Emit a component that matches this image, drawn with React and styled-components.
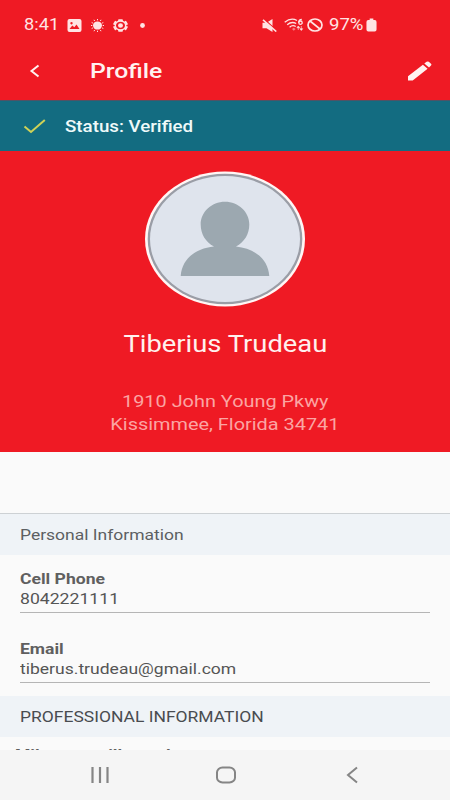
import styled, { createGlobalStyle } from 'styled-components'

const colors = {
  red: '#ef1a24',
  teal: '#136c81',
  page: '#fafafa',
  band: '#eff3f7',
  nav: '#f5f5f5',
}

const GlobalStyle = createGlobalStyle`
  * {
    box-sizing: border-box;
  }
  body {
    margin: 0;
    font-family: Roboto, 'Liberation Sans', sans-serif;
  }
`
const Screen = styled.div`
  display: flex;
  flex-direction: column;
  width: 450px;
  height: 800px;
  overflow: hidden;
  background-color: ${colors.page};
`
// widened type, stretched from the left unless $center is set
const Wide = styled.span`
  display: block;
  white-space: nowrap;
  transform: scaleX(${(props) => props.$x || 1.17});
  transform-origin: ${(props) => (props.$center ? 'center' : 'left')};
`
const StatusBar = styled.div`
  flex: none;
  display: flex;
  justify-content: space-between;
  align-items: center;
  height: 50px;
  padding: 0 73px 0 24px;
  background-color: ${colors.red};
  color: #ffe3e3;
  font-size: 16px;
`
const StatusGroup = styled.div`
  display: flex;
  align-items: center;
`
const Clock = styled.div`
  width: 43px;
  padding-bottom: 1px;
`
const Battery = styled.div`
  width: 37px;
  margin-left: 6px;
  padding-bottom: 1px;
`
const StatusIcon = styled.svg`
  display: block;
  margin-right: ${(props) => props.$gap || 0}px;
`
const TopBar = styled.header`
  flex: none;
  display: flex;
  align-items: center;
  height: 50px;
  padding: 0 18px 9px 29px;
  background-color: ${colors.red};
  color: #fff2f0;
`
const Title = styled.h1`
  flex: 1;
  margin: 0 0 0 49px;
  font-size: 21px;
  font-weight: 500;
`
const Banner = styled.div`
  flex: none;
  display: flex;
  align-items: center;
  height: 51px;
  padding-left: 23px;
  border-top: 1px solid #4f5366;
  background-color: ${colors.teal};
  color: #effafa;
  font-size: 16px;
  font-weight: 500;
`
const BannerText = styled.div`
  margin-left: 19px;
`
const Hero = styled.section`
  flex: none;
  display: flex;
  flex-direction: column;
  align-items: center;
  height: 301px;
  padding-top: 20px;
  background-color: ${colors.red};
`
const Name = styled.h2`
  margin: 22px 0 31px;
  color: #fff1ee;
  font-size: 24px;
  font-weight: 400;
  line-height: 30px;
`
const Address = styled.div`
  color: #fba5a3;
  font-size: 17px;
  line-height: 23px;
`
const Spacer = styled.div`
  flex: none;
  height: 61px;
`
const Band = styled.h3`
  flex: none;
  height: ${(props) => (props.$line ? 42 : 41)}px;
  margin: 0;
  padding-left: 20px;
  border-top: ${(props) => (props.$line ? '1px solid #cdd1d4' : 'none')};
  background-color: ${colors.band};
  color: ${(props) => (props.$line ? '#5c5f62' : '#494c50')};
  font-size: 15px;
  font-weight: 400;
  line-height: 43px;
`
const Fields = styled.div`
  flex: none;
  display: flex;
  flex-direction: column;
  gap: 26px;
  padding: 14px 20px 13px;
`
const Field = styled.div`
  height: 44px;
  border-bottom: 1px solid #b5b5b5;
  color: #555;
  font-size: 15px;
  line-height: 20px;
`
const Label = styled.div`
  color: #5f5f5f;
  font-weight: 700;
`
const NextField = styled.div`
  flex: none;
  height: 13px;
  padding: 8px 0 0 15px;
  overflow: hidden;
  color: #5f5f5f;
  font-size: 15px;
  font-weight: 700;
  line-height: 20px;
`
const NavBar = styled.nav`
  flex: 1;
  display: grid;
  grid-template-columns: repeat(3, 126px);
  place-items: center;
  padding-left: 37px;
  background-color: ${colors.nav};
`

function Avatar() {
  return (
    <svg width="160" height="136" viewBox="0 0 160 136">
      <ellipse cx="80" cy="68" rx="80" ry="67.5" fill="#fff6f5" />
      <ellipse cx="80" cy="68" rx="77.300" ry="65.200" fill="#9a9da6" />
      <ellipse cx="80" cy="68" rx="75" ry="63" fill="#dfe4ed" />
      <path
        d="M80 30.7C93.500 30.700 104.300 41 104.300 53.500C104.300 63 99.500 71 91 75.500C110 77.500 123 88 124.300 105H35.700C37 88 50 77.500 69 75.500C60.500 71 55.700 63 55.700 53.500C55.700 41 66.500 30.700 80 30.700Z"
        fill="#9ca8b0"
      />
    </svg>
  )
}

function LeftStatus() {
  return (
    <StatusGroup>
      <Clock>
        <Wide $x={1.14}>8:41</Wide>
      </Clock>
      <StatusIcon $gap={9} width="15" height="13" viewBox="0 0 15 13">
        <path
          fillRule="evenodd"
          d="M2.500 0H12.500Q14.500 0 14.500 2V11Q14.500 13 12.500 13H2.500Q.5 13 .5 11V2Q.5 0 2.500 0ZM2.500 10H12.500L9.500 5.500L7.300 8.300L5.300 6.500ZM4.500 3A1.200 1.200 0 1 0 4.510 3Z"
          fill="currentColor"
        />
      </StatusIcon>
      <StatusIcon $gap={9} width="13" height="13" viewBox="0 0 13 13">
        <ellipse cx="6.500" cy="6.500" rx="4.500" ry="4.100" fill="currentColor" />
        <path
          d="M6.500 0V1.300M6.500 11.700V13M0 6.500H1.300M11.700 6.500H13M3 .8L3.600 2M10 .8L9.400 2M3 12.200L3.600 11M10 12.200L9.400 11M.7 3.500L1.900 4.100M12.300 3.500L11.100 4.100M.7 9.500L1.900 8.900M12.300 9.500L11.100 8.900"
          stroke="currentColor"
          strokeWidth="1"
        />
      </StatusIcon>
      <StatusIcon $gap={12} width="15" height="13" viewBox="0 0 15 13">
        <ellipse cx="7.500" cy="6.500" rx="5.200" ry="4.500" fill="none" stroke="currentColor" strokeWidth="1.400" />
        <path
          d="M6 1.200H9M6 11.800H9M1.200 5L2.500 2.800M13.800 5L12.500 2.800M1.200 8L2.500 10.200M13.800 8L12.500 10.200"
          stroke="currentColor"
          strokeWidth="1.900"
          strokeLinecap="round"
        />
        <ellipse cx="7.500" cy="6.500" rx="2.500" ry="2.200" fill="currentColor" />
      </StatusIcon>
      <StatusIcon width="5" height="5" viewBox="0 0 5 5">
        <circle cx="2.500" cy="2.500" r="2.400" fill="currentColor" />
      </StatusIcon>
    </StatusGroup>
  )
}

function RightStatus() {
  return (
    <StatusGroup>
      <StatusIcon $gap={7} width="15" height="13" viewBox="0 0 15 13">
        <path d="M.5 3.800H4.500L10.500 0V13L4.500 9.200H.5Z" fill="currentColor" />
        <path d="M2 0L15 11.800" stroke={colors.red} strokeWidth="1.300" />
        <path d="M1 .8L14.300 12.500" stroke="currentColor" strokeWidth="1.600" />
      </StatusIcon>
      <StatusIcon $gap={3} width="20" height="14" viewBox="0 0 20 14">
        <g fill="none" stroke="currentColor" strokeWidth="1.300">
          <path d="M.7 4.200Q7 -.8 13 2.500" />
          <path d="M3.200 6.800Q7.500 3 12.200 5.500" />
          <path d="M5.600 9.200Q8.500 6.600 11.700 8.500" />
          <path d="M17.800 1.500Q14.700 1.500 14.700 4.700" />
          <circle cx="16.500" cy="4.700" r="1.700" />
        </g>
        <path d="M8 11L9.800 9.700L11.600 11L9.800 12.800Z" fill="currentColor" opacity=".5" />
        <path
          d="M14.300 12V8.600M14.300 8L12.900 9.800H15.700ZM17.300 8V12M17.300 12.500L15.900 10.700H18.700Z"
          stroke="currentColor"
          strokeWidth=".6"
          fill="currentColor"
        />
      </StatusIcon>
      <StatusIcon width="16" height="14" viewBox="0 0 16 14">
        <ellipse cx="8" cy="7" rx="7" ry="6" fill="none" stroke="currentColor" strokeWidth="1.700" />
        <path d="M3 3L13 11" stroke="currentColor" strokeWidth="1.700" />
      </StatusIcon>
      <Battery>
        <Wide $x={1.16}>97%</Wide>
      </Battery>
      <StatusIcon width="11" height="14" viewBox="0 0 12 14" preserveAspectRatio="none">
        <path
          d="M4 .5H8V2H9.500Q11.500 2 11.500 4V11.500Q11.500 13.500 9.500 13.500H2.500Q.5 13.500 .5 11.500V4Q.5 2 2.500 2H4Z"
          fill="currentColor"
        />
      </StatusIcon>
    </StatusGroup>
  )
}

function App() {
  return (
    <Screen>
      <GlobalStyle />
      <StatusBar>
        <LeftStatus />
        <RightStatus />
      </StatusBar>
      <TopBar>
        <svg width="12" height="14" viewBox="0 0 12 14">
          <path d="M9.500 1.500L2.500 7L9.500 12.500" fill="none" stroke="currentColor" strokeWidth="2" />
        </svg>
        <Title>
          <Wide $x={1.18}>Profile</Wide>
        </Title>
        <svg width="25" height="20" viewBox="0 0 25 20">
          <path
            d="M1 15.200L15.900 3.800L20.600 7.800L5.700 19.500H1ZM17.300 2.600L19.600 .8Q20.700 0 21.800 .8L24 2.700Q25 3.700 24 4.600L22 6.500Z"
            fill="currentColor"
          />
        </svg>
      </TopBar>
      <Banner>
        <svg width="23" height="15" viewBox="0 0 23 15">
          <path d="M1.500 7.500L8 13L21.800 1" fill="none" stroke="#cfd257" strokeWidth="2" />
        </svg>
        <BannerText>
          <Wide>Status: Verified</Wide>
        </BannerText>
      </Banner>
      <Hero>
        <Avatar />
        <Name>
          <Wide $center $x={1.14}>
            Tiberius Trudeau
          </Wide>
        </Name>
        <Address>
          <Wide $center>1910 John Young Pkwy</Wide>
        </Address>
        <Address>
          <Wide $center>Kissimmee, Florida 34741</Wide>
        </Address>
      </Hero>
      <Spacer />
      <Band $line>
        <Wide $x={1.165}>Personal Information</Wide>
      </Band>
      <Fields>
        <Field>
          <Label>
            <Wide>Cell Phone</Wide>
          </Label>
          <Wide $x={1.175}>8042221111</Wide>
        </Field>
        <Field>
          <Label>
            <Wide>Email</Wide>
          </Label>
          <Wide $x={1.168}>tiberus.trudeau@gmail.com</Wide>
        </Field>
      </Fields>
      <Band>
        <Wide $x={1.165}>PROFESSIONAL INFORMATION</Wide>
      </Band>
      <NextField>
        <Wide>Miles you will travel</Wide>
      </NextField>
      <NavBar>
        <svg width="20" height="18" viewBox="0 0 20 18">
          <path d="M2.500 1V17M10 1V17M17.500 1V17" stroke="#858585" strokeWidth="2.200" />
        </svg>
        <svg width="22" height="18" viewBox="0 0 22 18">
          <rect x="2" y="1.500" width="18" height="15" rx="5.500" ry="4.800" fill="none" stroke="#858585" strokeWidth="2" />
        </svg>
        <svg width="14" height="18" viewBox="0 0 14 18">
          <path d="M12 1.500L3 9L12 16.500" fill="none" stroke="#858585" strokeWidth="2" />
        </svg>
      </NavBar>
    </Screen>
  )
}

export default App
